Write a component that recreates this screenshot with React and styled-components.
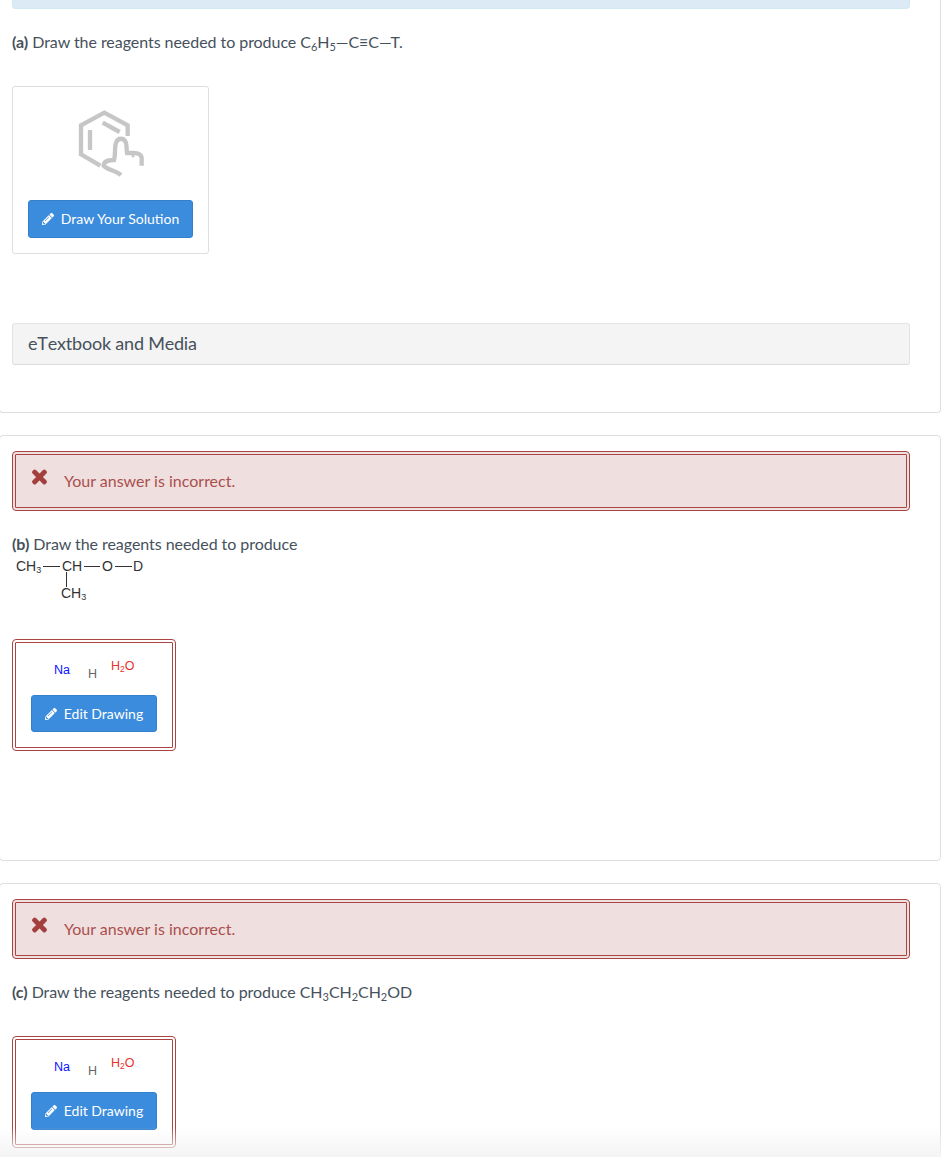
import styled, { createGlobalStyle } from 'styled-components';
import { FaPencilAlt, FaTimes } from 'react-icons/fa';

const GlobalStyle = createGlobalStyle`
  html, body {
    margin: 0;
    padding: 0;
    height: 1157px;
    overflow: hidden;
    background: #fff;
    font-family: Lato, "Open Sans", sans-serif;
    color: #46515b;
  }
`;

const Page = styled.div`
  width: 941px;
`;

const Panel = styled.section`
  box-sizing: border-box;
  margin: 0 0 22px -1px;
  width: 942px;
  padding: ${(p) => (p.$first ? '0' : '15px')} 30px ${(p) => p.$bottom} 12px;
  background: #fff;
  border: 1px solid #dedede;
  border-top-width: ${(p) => (p.$first ? '0' : '1px')};
  border-radius: ${(p) => (p.$first ? '0 0 4px 4px' : '4px')};
`;

const InfoAlert = styled.div`
  height: 9px;
  box-sizing: border-box;
  background: #dceaf5;
  border: 1px solid #cfe8f3;
  border-top: 0;
  border-radius: 0 0 4px 4px;
`;

const ErrorAlert = styled.div`
  box-sizing: border-box;
  display: flex;
  align-items: center;
  height: 60px;
  padding: 0 0 2px 15px;
  background: #efdfdf;
  border: 4px double #a94442;
  border-radius: 4px;
  color: #ab4f4d;
  font-size: 16px;
`;

const ErrorIcon = styled(FaTimes)`
  width: 17px;
  height: 20px;
  margin: -6px 16px 0 0;
  color: #a3403e;
  stroke: currentColor;
  stroke-width: 30;
`;

const Question = styled.p`
  margin: 22px 0 0;
  font-size: 16px;
  line-height: 22px;
  letter-spacing: -0.05px;

  b {
    font-weight: 700;
  }

  sub {
    font-size: 11px;
    line-height: 0;
    vertical-align: -3px;
  }
`;

const DrawCard = styled.div`
  box-sizing: border-box;
  display: flex;
  flex-direction: column;
  align-items: center;
  width: 197px;
  height: 168px;
  margin-top: 33px;
  padding: 13px 15px 15px;
  border: 1px solid #dedede;
  border-radius: 3px;
`;

const HandIcon = styled.svg`
  width: 100px;
  height: 90px;
  margin-bottom: 10px;
  display: block;
`;

const ActionButton = styled.button`
  box-sizing: border-box;
  display: flex;
  align-items: center;
  justify-content: center;
  gap: 7px;
  width: ${(p) => p.$width};
  height: ${(p) => p.$height};
  padding: 0;
  flex: none;
  background: #3b8cdc;
  border: 1px solid #3480cb;
  border-radius: 3px;
  color: #fff;
  font-family: inherit;
  font-size: 14px;
  line-height: 1;

  svg {
    width: 12px;
    height: 12px;
  }
`;

const MediaBar = styled.div`
  box-sizing: border-box;
  display: flex;
  align-items: center;
  height: 42px;
  margin-top: 69px;
  padding: 0 15px 2px;
  background: #f4f4f4;
  border: 1px solid #e3e3e3;
  border-bottom-color: #dcdcdc;
  border-radius: 3px;
  font-size: 18px;
  font-kerning: none;
  letter-spacing: -0.2px;
`;

const Molecule = styled.svg`
  display: block;
  width: 140px;
  height: 46px;
  margin-top: 3px;
`;

const DrawingBox = styled.div`
  box-sizing: border-box;
  width: 164px;
  height: 112px;
  margin-top: ${(p) => p.$top};
  padding: 15px;
  border: 4px double #a94442;
  border-radius: 4px;
`;

const Preview = styled.svg`
  display: block;
  width: 126px;
  height: 37px;
`;

const FadeBar = styled.div`
  position: fixed;
  left: 0;
  right: 0;
  bottom: 0;
  height: 30px;
  background: linear-gradient(to bottom, rgba(244, 244, 244, 0), rgba(244, 244, 244, 1));
  pointer-events: none;
`;

const chemFont = '"Liberation Sans", Arial, sans-serif';

const Hand = () => (
  <HandIcon viewBox="0 0 300 270" fill="none" stroke="#c6c6c6" strokeWidth="13">
    <path d="M118 197 L60 163 V76 L130 38 L200 76 V108" />
    <path d="M125 68 L176 96" />
    <path d="M87 90 V150" />
    <path d="M180 225 C165 212 140 210 128 197 C128 186 140 180 159 180 C164 165 160 140 165 129 C170 112 190 112 195 129 C198 140 196 150 198 159 H219 C232 159 242 165 242 175 V197" />
    <path d="M216 159 V172" strokeWidth="8" />
  </HandIcon>
);

const Isopropyl = () => (
  <Molecule viewBox="0 0 140 46" fontFamily={chemFont} fontSize="14" fill="#333">
    <text x="4" y="13">CH<tspan fontSize="9" dy="2">3</tspan></text>
    <path d="M31 8.5 H48 M72 8.5 H88 M103 8.5 H120 M54.5 14 V29" stroke="#333" strokeWidth="1" />
    <text x="50" y="13">CH</text>
    <text x="90" y="13">O</text>
    <text x="121" y="13">D</text>
    <text x="49" y="40">CH<tspan fontSize="9" dy="2">3</tspan></text>
  </Molecule>
);

const Reagents = () => (
  <Preview viewBox="0 0 126 37" fontFamily={chemFont} fontSize="12.5">
    <text x="23" y="16" fill="#0a14ff">Na</text>
    <text x="57" y="19.5" fill="#666">H</text>
    <text x="80" y="12" fill="#e8302c">H<tspan fontSize="8.5" dy="2">2</tspan><tspan dy="-2">O</tspan></text>
  </Preview>
);

const Incorrect = () => (
  <ErrorAlert>
    <ErrorIcon />
    Your answer is incorrect.
  </ErrorAlert>
);

const EditButton = ({ height }) => (
  <ActionButton $width="126px" $height={height}>
    <FaPencilAlt />
    Edit Drawing
  </ActionButton>
);

export default function App() {
  return (
    <Page>
      <GlobalStyle />
      <Panel $first $bottom="47px">
        <InfoAlert />
        <Question>
          <b>(a)</b> Draw the reagents needed to produce C<sub>6</sub>H<sub>5</sub>—C≡C—T.
        </Question>
        <DrawCard>
          <Hand />
          <ActionButton $width="165px" $height="38px">
            <FaPencilAlt />
            Draw Your Solution
          </ActionButton>
        </DrawCard>
        <MediaBar>eTextbook and Media</MediaBar>
      </Panel>

      <Panel $bottom="109px">
        <Incorrect />
        <Question>
          <b>(b)</b> Draw the reagents needed to produce
        </Question>
        <Isopropyl />
        <DrawingBox $top="35px">
          <Reagents />
          <EditButton height="37px" />
        </DrawingBox>
      </Panel>

      <Panel $bottom="40px">
        <Incorrect />
        <Question>
          <b>(c)</b> Draw the reagents needed to produce CH<sub>3</sub>CH<sub>2</sub>CH<sub>2</sub>OD
        </Question>
        <DrawingBox $top="33px">
          <Reagents />
          <EditButton height="38px" />
        </DrawingBox>
      </Panel>
      <FadeBar />
    </Page>
  );
}
